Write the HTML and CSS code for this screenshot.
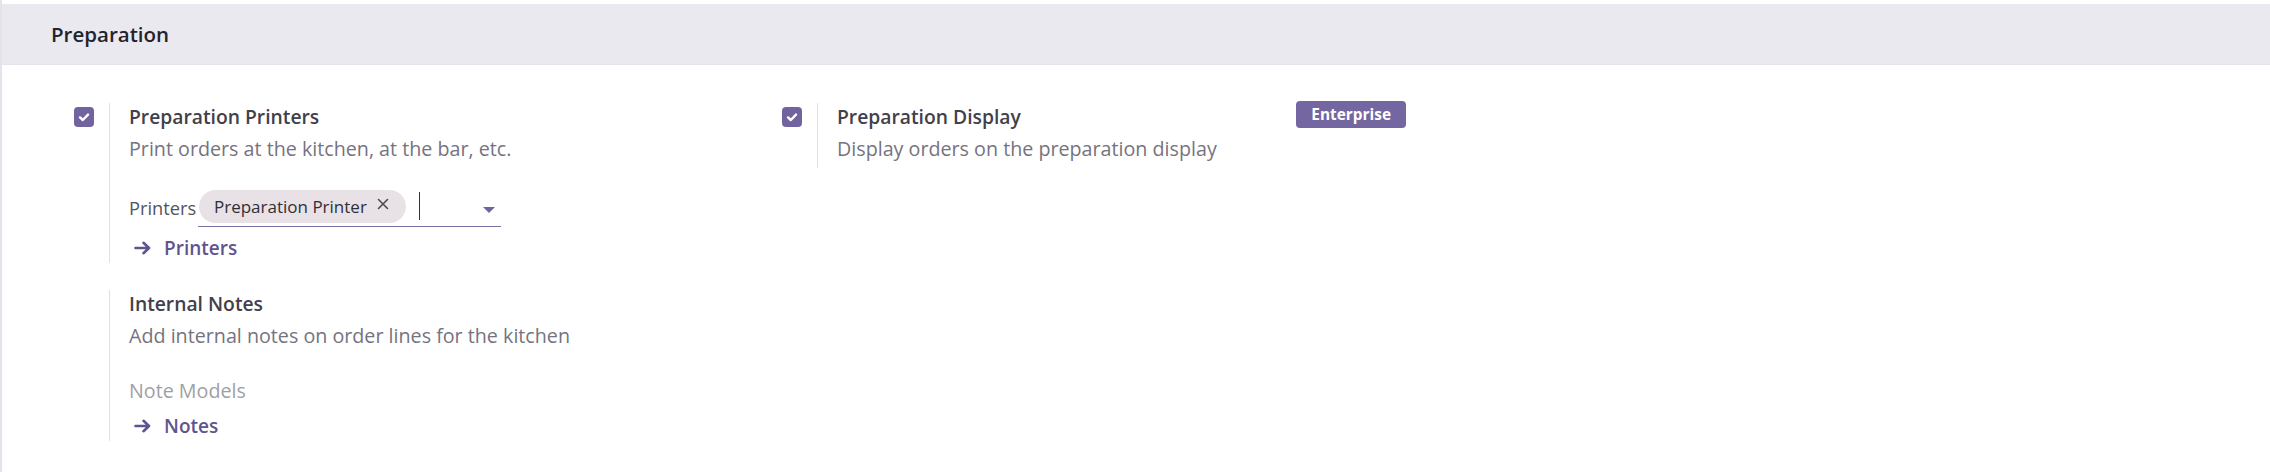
FILE: index.html
```html
<!DOCTYPE html>
<html lang="en">
<head>
<meta charset="utf-8">
<title>Preparation settings</title>
<link rel="stylesheet" href="styles.css">
</head>
<body>
<div class="page">
  <div class="section-head">
    <h3 class="section-title">Preparation</h3>
  </div>
  <div class="settings">
    <div class="setting">
      <div class="check-col">
        <span class="checkbox"><svg viewBox="0 0 20 20" width="20" height="20"><path d="M6 10.4 L8.8 13 L14 7.6" fill="none" stroke="#fff" stroke-width="2.4" stroke-linecap="round" stroke-linejoin="round"/></svg></span>
      </div>
      <div class="pane">
        <div class="title">Preparation Printers</div>
        <div class="desc">Print orders at the kitchen, at the bar, etc.</div>
        <div class="field-row">
          <span class="field-label">Printers</span>
          <div class="many2many">
            <span class="tag">Preparation Printer<svg class="tag-x" viewBox="0 0 12 12" width="12" height="12"><path d="M1.5 1.5 L10.5 10.5 M10.5 1.5 L1.5 10.5" stroke="#4a4a52" stroke-width="1.6" stroke-linecap="round"/></svg></span>
            <span class="cursor"></span>
            <svg class="caret" viewBox="0 0 12 6" width="12" height="6"><path d="M0 0 H12 L6 6 Z" fill="#71639e"/></svg>
          </div>
        </div>
        <a class="link" href="#"><svg class="arrow" viewBox="0 0 18 14" width="18" height="14"><path d="M1.5 7 H15 M9.5 1.8 L15 7 L9.5 12.2" fill="none" stroke="#5f5391" stroke-width="2.6" stroke-linecap="round" stroke-linejoin="round"/></svg>Printers</a>
      </div>
    </div>

    <div class="setting">
      <div class="check-col">
        <span class="checkbox"><svg viewBox="0 0 20 20" width="20" height="20"><path d="M6 10.4 L8.8 13 L14 7.6" fill="none" stroke="#fff" stroke-width="2.4" stroke-linecap="round" stroke-linejoin="round"/></svg></span>
      </div>
      <div class="pane pane-short">
        <div class="title-row">
          <div class="title">Preparation Display</div>
          <span class="badge">Enterprise</span>
        </div>
        <div class="desc">Display orders on the preparation display</div>
      </div>
    </div>

    <div class="setting">
      <div class="check-col"></div>
      <div class="pane">
        <div class="title">Internal Notes</div>
        <div class="desc">Add internal notes on order lines for the kitchen</div>
        <div class="muted-label">Note Models</div>
        <a class="link link-notes" href="#"><svg class="arrow" viewBox="0 0 18 14" width="18" height="14"><path d="M1.5 7 H15 M9.5 1.8 L15 7 L9.5 12.2" fill="none" stroke="#5f5391" stroke-width="2.6" stroke-linecap="round" stroke-linejoin="round"/></svg>Notes</a>
      </div>
    </div>
  </div>
</div>
</body>
</html>
```

FILE: styles.css
```css
* { box-sizing: border-box; }

html, body {
  margin: 0;
  padding: 0;
  background: #ffffff;
}

body {
  font-family: "Open Sans", "Noto Sans", sans-serif;
  color: #3f3f4a;
}

.page {
  min-height: 472px;
  padding-top: 4px;
  border-left: 2px solid #e4e2ea;
}

.section-head {
  height: 61px;
  background: #ebe9f0;
  border-bottom: 1px solid #e4e2ea;
  display: flex;
  align-items: center;
  padding-left: 49px;
}

.section-title {
  margin: 0;
  font-size: 20.5px;
  font-weight: 600;
  color: #23232c;
  line-height: 28px;
}

.settings {
  display: grid;
  grid-template-columns: 624px 624px;
  column-gap: 84px;
  row-gap: 27px;
  padding: 38px 0 0 72px;
  align-items: start;
}

.setting {
  display: flex;
}

.check-col {
  width: 35px;
  flex: none;
}

.checkbox {
  display: block;
  width: 20px;
  height: 20px;
  margin-top: 4px;
  border-radius: 4px;
  background: #71639e;
}

.checkbox svg { display: block; }

.pane {
  flex: 1;
  border-left: 1px solid #e0dfe4;
  padding-left: 19px;
  padding-bottom: 1px;
}

.pane-short { padding-bottom: 5px; }

.title-row {
  display: flex;
  justify-content: space-between;
  align-items: flex-start;
}

.title {
  font-size: 19.3px;
  font-weight: 600;
  line-height: 28px;
  color: #41404b;
}

.desc {
  margin-top: 4px;
  font-size: 19.7px;
  line-height: 28px;
  color: #75737f;
}

.badge {
  margin-top: -2px;
  height: 27px;
  padding: 0 15px;
  border-radius: 4px;
  background: #7466a1;
  color: #ffffff;
  font-size: 15.4px;
  font-weight: 700;
  line-height: 27px;
}

.field-row {
  margin-top: 26px;
  display: flex;
  align-items: center;
}

.field-label {
  font-size: 18.3px;
  line-height: 28px;
  color: #54535e;
  width: 69px;
  flex: none;
}

.many2many {
  width: 303px;
  height: 38px;
  border-bottom: 1px solid #7d72a3;
  display: flex;
  align-items: center;
  padding-left: 1px;
  padding-bottom: 3px;
}

.tag {
  display: inline-flex;
  align-items: center;
  height: 33px;
  padding: 0 17px 0 15px;
  border-radius: 17px;
  background: #e8e2e6;
  font-size: 17px;
  font-weight: 500;
  color: #2f2f3a;
}

.tag-x {
  margin-left: 10px;
  margin-top: -4px;
}

.cursor {
  width: 1px;
  height: 28px;
  background: #333;
  margin-left: 13px;
}

.caret {
  margin-left: 63px;
  margin-top: 7px;
}

.link {
  display: flex;
  align-items: center;
  margin-top: 7px;
  padding-left: 5px;
  font-size: 19px;
  font-weight: 600;
  line-height: 28px;
  color: #5f5391;
  text-decoration: none;
}

.arrow {
  margin-right: 12px;
}

.muted-label {
  margin-top: 27px;
  font-size: 19.7px;
  line-height: 28px;
  color: #a09fa6;
}

.link-notes { margin-top: 7px; }
```
